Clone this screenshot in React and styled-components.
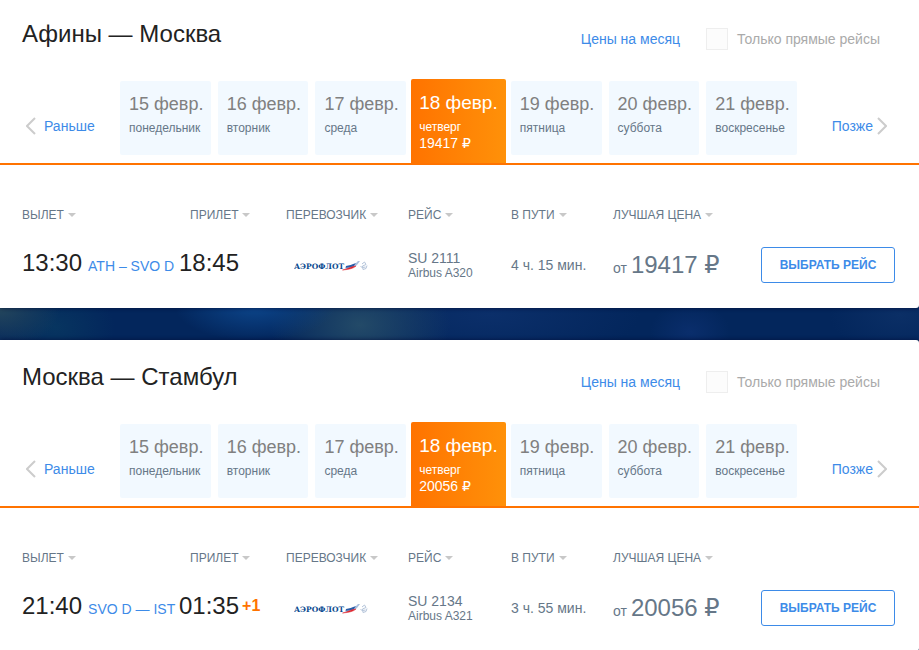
import React, { useState } from "react";
import styled, { createGlobalStyle, css } from "styled-components";

const GlobalStyle = createGlobalStyle`
	* {
		box-sizing: border-box;
	}

	html {
		scrollbar-width: none;
	}

	body {
		margin: 0;
		font-family: "Liberation Sans", Arial, sans-serif;
		font-size: 14px;
		color: #667788;
		background-color: #03265c;
	}

	button,
	input {
		font-family: inherit;
	}
`;

const Page = styled.main`
	display: flex;
	flex-direction: column;
	gap: 32px;
	min-height: 100vh;
	margin-top: -3px;
	background:
		radial-gradient(ellipse 60px 40px at 0 312px, #24465c, transparent),
		radial-gradient(ellipse 60px 40px at 55px 330px, #073560, transparent),
		radial-gradient(ellipse 80px 34px at 255px 310px, #0c458a, transparent),
		radial-gradient(ellipse 90px 60px at 360px 328px, #234a68, transparent),
		radial-gradient(ellipse 150px 50px at 490px 318px, #0b2f6a, transparent),
		radial-gradient(ellipse 40px 30px at 690px 335px, #0a2e6c, transparent),
		radial-gradient(ellipse 70px 40px at 900px 318px, #0b2f66, transparent),
		#03265c;
`;

const Card = styled.section`
	background-color: white;
	border-radius: 0 3px 3px 0;
	box-shadow: 0 0 4px rgba(0, 10, 50, 0.7);
`;

const Header = styled.header`
	display: flex;
	justify-content: space-between;
	padding: 23px 39px 0 22px;
`;

const Title = styled.h2`
	margin: 0;
	font-size: 24px;
	line-height: 28px;
	font-weight: normal;
	color: #222;
`;

const Options = styled.div`
	display: flex;
	align-items: center;
	gap: 26px;
	margin-top: 8px;
`;

const Link = styled.a`
	display: flex;
	align-items: center;
	gap: ${(props) => props.gap || 8}px;
	font-size: 14px;
	line-height: 16px;
	color: #3d8be8;
	text-decoration: none;
`;

const CheckLabel = styled.label`
	display: flex;
	align-items: center;
	gap: 9px;
	font-size: 14px;
	line-height: 16px;
	color: #aaa;
`;

const Checkbox = styled.input`
	appearance: none;
	width: 22px;
	height: 22px;
	margin: 0;
	background-color: #fcfcfc;
	border: 1px solid #eee;

	&:checked {
		background-color: #3d8be8;
	}
`;

const Dates = styled.nav`
	display: grid;
	grid-template-columns: 94px 1fr 90px;
	padding: 31px 32px 8px 26px;
	border-bottom: 2px solid #ff7300;
`;

const Shift = styled.div`
	display: flex;
	align-items: center;
	justify-content: ${(props) => (props.right ? "flex-end" : "flex-start")};
	padding-top: 16px;
`;

const Days = styled.div`
	display: grid;
	grid-template-columns: repeat(7, 1fr);
	gap: 7px;
`;

const DayDate = styled.span`
	font-size: 18px;
	line-height: 22px;
	color: #808080;
`;

const DayName = styled.span`
	margin-top: 6px;
	font-size: 12px;
	line-height: 14px;
`;

const DayPrice = styled.span`
	font-size: 14px;
	line-height: 18px;
`;

const Day = styled.button`
	display: flex;
	flex-direction: column;
	height: 74px;
	padding: 12px 0 0 9px;
	border: none;
	border-radius: 2px;
	background-color: #f2f9ff;
	color: #667788;
	text-align: left;
	white-space: nowrap;
	cursor: pointer;

	${(props) =>
		props.isSelected &&
		css`
			height: 84px;
			margin: -2px -2px -8px;
			padding-left: 8px;
			border-radius: 2px 2px 0 0;
			background: linear-gradient(90deg, #ff7300, #ff9109);
			color: white;

			${DayDate} {
				font-size: 19px;
				line-height: 23px;
				color: white;
			}
		`}
`;

const Flights = styled.table`
	width: 100%;
	table-layout: fixed;
	border-collapse: collapse;
	margin-top: 41px;
`;

const Th = styled.th`
	height: 18px;
	padding: 0 0 0 ${(props) => props.indent || 0}px;
	text-align: left;
	white-space: nowrap;
`;

const Sort = styled.button`
	display: flex;
	align-items: center;
	gap: 4px;
	padding: 0;
	border: none;
	background: none;
	font-size: 12px;
	line-height: 18px;
	color: #667788;
	text-transform: uppercase;
	cursor: pointer;

	&::after {
		content: "";
		border: 4px solid transparent;
		border-top-color: #c8c8c8;
		border-bottom: none;
	}
`;

const Td = styled.td`
	height: 82px;
	padding: 0 0 ${(props) => (props.raised ? 4 : 0)}px;
	vertical-align: middle;
	white-space: nowrap;
`;

const Baseline = styled.div`
	display: flex;
	align-items: baseline;
	gap: ${(props) => props.gap}px;
`;

const Time = styled.span`
	font-size: 24px;
	line-height: 28px;
	color: #222;
`;

const NextDay = styled.sup`
	align-self: center;
	font-size: 16px;
	line-height: 16px;
	font-weight: bold;
	color: #ff7300;
`;

const FlightNo = styled.div`
	font-size: 14px;
	line-height: 16px;
`;

const Plane = styled.div`
	font-size: 12px;
	line-height: 14px;
`;

const Price = styled.span`
	font-size: 24px;
	line-height: 28px;
`;

const Ruble = styled.span`
	font-family: "DejaVu Sans", sans-serif;
	line-height: 1;
`;

const Choose = styled.button`
	display: block;
	width: 134px;
	height: 36px;
	padding: 0;
	border: 1px solid #3d8be8;
	border-radius: 3px;
	background-color: white;
	font-size: 12px;
	font-weight: bold;
	color: #3d8be8;
	cursor: pointer;
`;

const Logo = styled.svg`
	display: block;
	margin: 2px 0 0 8px;
`;

const Chevron = ({ right }) => (
	<svg width="10" height="18" viewBox="0 0 10 18" fill="none" stroke="#ccc" strokeWidth="2">
		<path d={right ? "M1 1l8 8-8 8" : "M9 1L1 9l8 8"} />
	</svg>
);

const Aeroflot = () => (
	<Logo width="74" height="12" viewBox="0 0 148 24" role="img" aria-label="Аэрофлот">
		<text x="0" y="17" fontFamily="DejaVu Serif, serif" fontWeight="bold" fontSize="15" fill="#0b4a8f">
			АЭРОФЛОТ
		</text>
		<path d="M98 19c8-3 14-9 24-11l6-6h4l-6 8c-6 6-16 8-28 9z" fill="#a9bfdd" />
		<path d="M104 12c6-1 12-3 20-6l-5 7-16 3z" fill="#2a5ca8" />
		<path d="M97 20c8-1 16-7 27-8-5 5-15 7-27 8z" fill="#e0262e" stroke="#e0262e" />
		<path
			d="M136 8l5-4 3 5-7 3 1 7 6-2 2-6M133 13l4 2 6-1"
			fill="none"
			stroke="#b4c4da"
			strokeWidth="2"
		/>
	</Logo>
);

const days = [
	["15 февр.", "понедельник"],
	["16 февр.", "вторник"],
	["17 февр.", "среда"],
	["18 февр.", "четверг"],
	["19 февр.", "пятница"],
	["20 февр.", "суббота"],
	["21 февр.", "воскресенье"],
];

const columns = [
	{ name: "Вылет", width: 157 },
	{ name: "Прилет", width: 107, indent: 11 },
	{ name: "Перевозчик", width: 122 },
	{ name: "Рейс", width: 103 },
	{ name: "В пути", width: 102 },
	{ name: "Лучшая цена", width: 148 },
];

const routes = [
	{
		id: "ath-mow",
		title: "Афины — Москва",
		depart: "13:30",
		path: "ATH – SVO D",
		arrive: "18:45",
		flight: "SU 2111",
		plane: "Airbus A320",
		duration: "4 ч. 15 мин.",
		price: 19417,
	},
	{
		id: "mow-ist",
		title: "Москва — Стамбул",
		depart: "21:40",
		path: "SVO D — IST",
		arrive: "01:35",
		nextDay: "+1",
		flight: "SU 2134",
		plane: "Airbus A321",
		duration: "3 ч. 55 мин.",
		price: 20056,
	},
];

const Col = styled.col`
	width: ${(props) => props.size}px;
`;

const TableWrap = styled.div`
	padding: 0 24px 2px 22px;
`;

const Route = ({ route }) => {
	const [selected, setSelected] = useState(3);

	return (
		<Card>
			<Header>
				<Title>{route.title}</Title>
				<Options>
					<Link href="#month">Цены на месяц</Link>
					<CheckLabel htmlFor={`direct-${route.id}`}>
						<Checkbox type="checkbox" id={`direct-${route.id}`} />
						Только прямые рейсы
					</CheckLabel>
				</Options>
			</Header>
			<Dates>
				<Shift>
					<Link href="#earlier">
						<Chevron />
						Раньше
					</Link>
				</Shift>
				<Days>
					{days.map(([date, name], i) => (
						<Day key={date} isSelected={selected === i} onClick={() => setSelected(i)}>
							<DayDate>{date}</DayDate>
							<DayName>{name}</DayName>
							{selected === i && (
								<DayPrice>
									{route.price} <Ruble>₽</Ruble>
								</DayPrice>
							)}
						</Day>
					))}
				</Days>
				<Shift right>
					<Link href="#later" gap={4}>
						Позже
						<Chevron right />
					</Link>
				</Shift>
			</Dates>
			<TableWrap>
				<Flights>
					<colgroup>
						{columns.map((c) => (
							<Col key={c.name} size={c.width} />
						))}
						<Col size={134} />
					</colgroup>
					<thead>
						<tr>
							{columns.map((c) => (
								<Th key={c.name} indent={c.indent}>
									<Sort>{c.name}</Sort>
								</Th>
							))}
							<Th />
						</tr>
					</thead>
					<tbody>
						<tr>
							<Td raised>
								<Baseline gap={6}>
									<Time>{route.depart}</Time>
									<Link href="#route">{route.path}</Link>
								</Baseline>
							</Td>
							<Td raised>
								<Baseline gap={3}>
									<Time>{route.arrive}</Time>
									{route.nextDay && <NextDay>{route.nextDay}</NextDay>}
								</Baseline>
							</Td>
							<Td>
								<Aeroflot />
							</Td>
							<Td>
								<FlightNo>{route.flight}</FlightNo>
								<Plane>{route.plane}</Plane>
							</Td>
							<Td>{route.duration}</Td>
							<Td>
								<Baseline gap={4}>
									от{" "}
									<Price>
										{route.price} <Ruble>₽</Ruble>
									</Price>
								</Baseline>
							</Td>
							<Td>
								<Choose>ВЫБРАТЬ РЕЙС</Choose>
							</Td>
						</tr>
					</tbody>
				</Flights>
			</TableWrap>
		</Card>
	);
};

const App = () => (
	<>
		<GlobalStyle />
		<Page>
			{routes.map((r) => (
				<Route key={r.id} route={r} />
			))}
		</Page>
	</>
);

export default App;
